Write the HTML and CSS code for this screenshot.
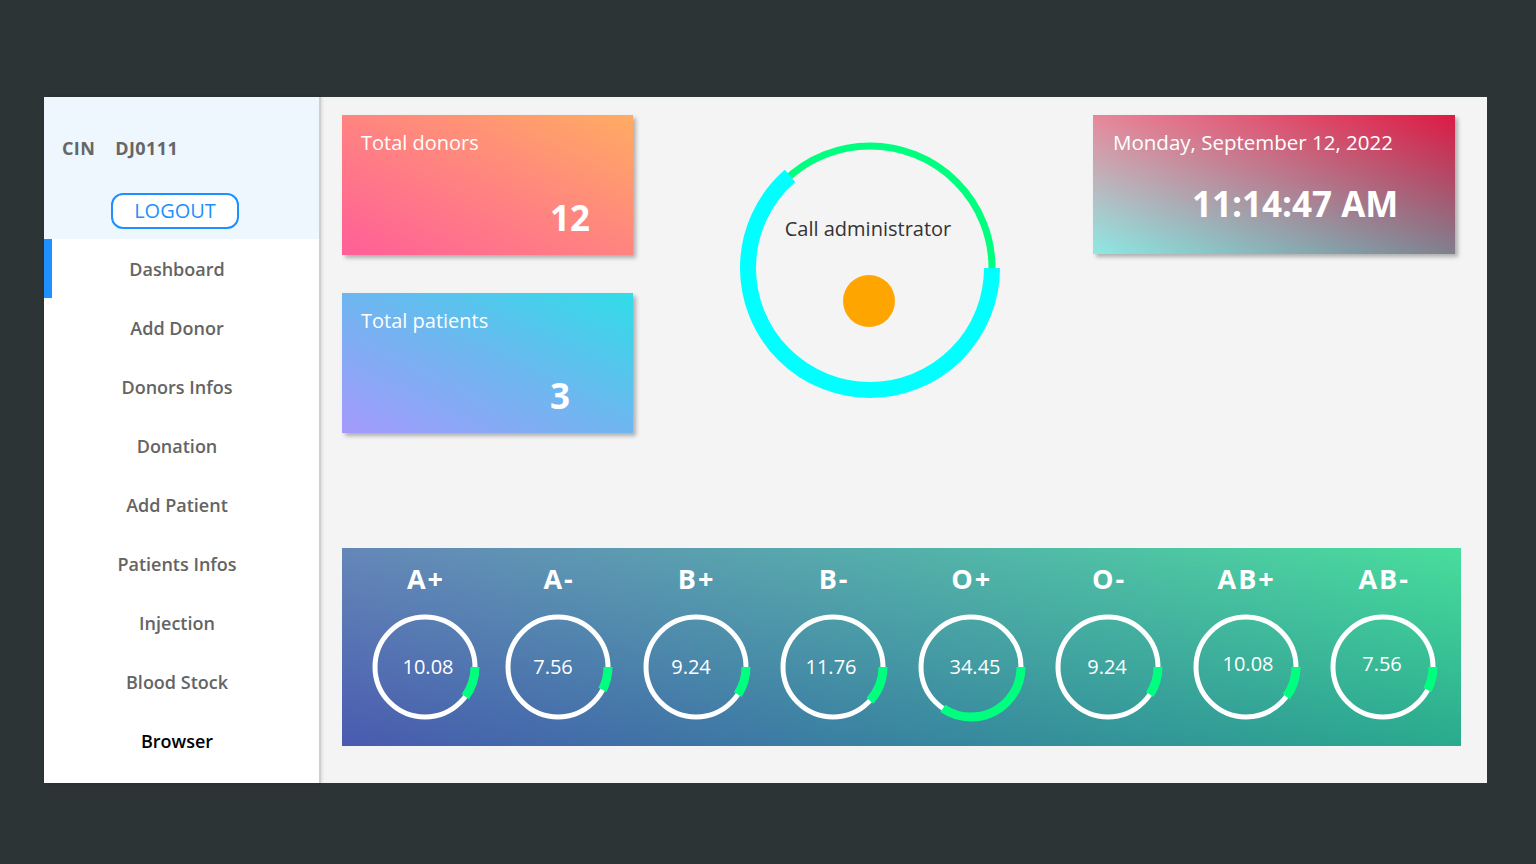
FILE: index.html
```html
<!DOCTYPE html>
<html lang="en">
<head>
<meta charset="utf-8">
<title>Blood Bank Dashboard</title>
<link rel="stylesheet" href="styles.css">
</head>
<body>
<div class="app">
  <aside class="sidebar">
    <div class="side-head">
      <div class="cin"><span>CIN</span><span>DJ0111</span></div>
      <button class="logout">LOGOUT</button>
    </div>
    <nav class="menu">
      <a class="item active">Dashboard</a>
      <a class="item">Add Donor</a>
      <a class="item">Donors Infos</a>
      <a class="item">Donation</a>
      <a class="item">Add Patient</a>
      <a class="item">Patients Infos</a>
      <a class="item">Injection</a>
      <a class="item">Blood Stock</a>
      <a class="item dark">Browser</a>
    </nav>
  </aside>
  <main class="main">
    <section class="top">
      <div class="stats">
        <div class="stat donors">
          <div class="stat-label">Total donors</div>
          <div class="stat-value">12</div>
        </div>
        <div class="stat patients">
          <div class="stat-label">Total patients</div>
          <div class="stat-value">3</div>
        </div>
      </div>
      <div class="call">
        <svg class="call-ring" width="260" height="260" viewBox="0 0 260 260">
          <circle cx="130" cy="130" r="122" fill="none" stroke="#00ff7f" stroke-width="7"/>
          <circle cx="130" cy="130" r="122" fill="none" stroke="#00ffff" stroke-width="16" stroke-dasharray="487.5 279" />
          <text class="call-text" x="128" y="98" text-anchor="middle">Call administrator</text>
          <circle cx="129" cy="163" r="26" fill="#ffa500"/>
        </svg>
      </div>
      <div class="date-card">
        <div class="date-inner">
          <div class="date">Monday, September 12, 2022</div>
          <div class="time">11:14:47 AM</div>
        </div>
      </div>
    </section>
    <section class="blood">
      <div class="group first"><div class="g-label">A+</div>
        <svg class="gauge" width="112" height="112" viewBox="0 0 112 112"><circle cx="56" cy="56" r="50" class="g-track"/><circle cx="56" cy="56" r="50" class="g-fill" stroke-dasharray="31.67 400"/><text x="59" y="55" class="g-val">10.08</text></svg></div>
      <div class="group"><div class="g-label">A-</div>
        <svg class="gauge" width="112" height="112" viewBox="0 0 112 112"><circle cx="56" cy="56" r="50" class="g-track"/><circle cx="56" cy="56" r="50" class="g-fill" stroke-dasharray="23.75 400"/><text x="51" y="55" class="g-val">7.56</text></svg></div>
      <div class="group"><div class="g-label">B+</div>
        <svg class="gauge" width="112" height="112" viewBox="0 0 112 112"><circle cx="56" cy="56" r="50" class="g-track"/><circle cx="56" cy="56" r="50" class="g-fill" stroke-dasharray="29.03 400"/><text x="51" y="55" class="g-val">9.24</text></svg></div>
      <div class="group"><div class="g-label">B-</div>
        <svg class="gauge" width="112" height="112" viewBox="0 0 112 112"><circle cx="56" cy="56" r="50" class="g-track"/><circle cx="56" cy="56" r="50" class="g-fill" stroke-dasharray="36.95 400"/><text x="54" y="55" class="g-val">11.76</text></svg></div>
      <div class="group"><div class="g-label">O+</div>
        <svg class="gauge" width="112" height="112" viewBox="0 0 112 112"><circle cx="56" cy="56" r="50" class="g-track"/><circle cx="56" cy="56" r="50" class="g-fill" stroke-dasharray="108.23 400"/><text x="60" y="55" class="g-val">34.45</text></svg></div>
      <div class="group"><div class="g-label">O-</div>
        <svg class="gauge" width="112" height="112" viewBox="0 0 112 112"><circle cx="56" cy="56" r="50" class="g-track"/><circle cx="56" cy="56" r="50" class="g-fill" stroke-dasharray="29.03 400"/><text x="55" y="55" class="g-val">9.24</text></svg></div>
      <div class="group"><div class="g-label">AB+</div>
        <svg class="gauge" width="112" height="112" viewBox="0 0 112 112"><circle cx="56" cy="56" r="50" class="g-track"/><circle cx="56" cy="56" r="50" class="g-fill" stroke-dasharray="31.67 400"/><text x="58" y="52" class="g-val">10.08</text></svg></div>
      <div class="group"><div class="g-label">AB-</div>
        <svg class="gauge" width="112" height="112" viewBox="0 0 112 112"><circle cx="56" cy="56" r="50" class="g-track"/><circle cx="56" cy="56" r="50" class="g-fill" stroke-dasharray="23.75 400"/><text x="55" y="52" class="g-val">7.56</text></svg></div>
    </section>
  </main>
</div>
</body>
</html>
```
FILE: styles.css
```css
* { box-sizing: border-box; }
html, body { margin: 0; padding: 0; }
body {
  background: #2d3436;
  font-family: "Open Sans", "Noto Sans", sans-serif;
  width: 1536px;
  height: 864px;
  overflow: hidden;
}
.app {
  display: flex;
  margin: 97px 0 0 44px;
  width: 1443px;
  height: 686px;
}
.sidebar {
  width: 277px;
  flex: none;
  background: #ffffff;
  border-right: 2px solid #cfcfcf;
  box-shadow: 1px 0 3px rgba(0,0,0,0.12);
  display: flex;
  flex-direction: column;
  position: relative;
  z-index: 1;
}
.side-head {
  height: 142px;
  background: #eef7fe;
  padding-top: 39px;
}
.cin {
  display: flex;
  gap: 20px;
  padding-left: 18px;
  font-size: 18px;
  font-weight: 700;
  line-height: 24px;
  letter-spacing: 0.4px;
  color: #666;
}
.logout {
  display: block;
  margin: 33px 0 0 67px;
  width: 128px;
  height: 36px;
  border: 2px solid #1e90ff;
  border-radius: 12px;
  background: #ffffff;
  color: #1e90ff;
  font-family: "Open Sans", "Noto Sans", sans-serif;
  font-size: 20px;
  line-height: 30px;
  padding: 0;
}
.menu { display: flex; flex-direction: column; }
.item {
  height: 59px;
  display: flex;
  align-items: center;
  justify-content: center;
  padding-right: 9px;
  font-size: 18px;
  font-weight: 600;
  color: #646464;
}
.item.active { box-shadow: inset 8px 0 0 #1e90ff; }
.item.dark { color: #000; }

.main {
  flex: 1;
  background: #f4f4f4;
  padding: 18px 26px 0 21px;
}
.top {
  display: flex;
  height: 318px;
}
.stats {
  display: flex;
  flex-direction: column;
  gap: 38px;
}
.stat {
  width: 291px;
  height: 140px;
  display: flex;
  flex-direction: column;
  padding: 14px 0 17px 19px;
  color: #fff;
  box-shadow: 3px 3px 4px rgba(0,0,0,0.28);
}
.donors { background: linear-gradient(to top right, #ff5f98 0%, #ff8480 50%, #ffac63 100%); }
.patients { background: linear-gradient(to top right, #a59afc 0%, #6fb6f0 50%, #30dde8 100%); }
.stat-label { font-size: 20px; line-height: 28px; }
.stat-value {
  margin-top: auto;
  padding-left: 189px;
  font-size: 35px;
  font-weight: 700;
  line-height: 40px;
}
.call {
  margin-left: 107px;
  padding-top: 23px;
}
.call-ring { display: block; }
.call-text { font-size: 20px; fill: #333; font-family: "Open Sans", "Noto Sans", sans-serif; }
.date-card {
  margin-left: 93px;
  width: 362px;
  height: 139px;
  position: relative;
  background: linear-gradient(to right, #8ee9e4, #80808e);
  box-shadow: 3px 3px 4px rgba(0,0,0,0.28);
  color: #fff;
}
.date-card::before {
  content: "";
  position: absolute;
  inset: 0;
  background: linear-gradient(to right, #e8879a, #dc1a44);
  -webkit-mask-image: linear-gradient(to bottom, #000, transparent);
  mask-image: linear-gradient(to bottom, #000, transparent);
}
.date-inner { position: relative; padding: 13px 0 0 20px; }
.date { font-size: 20.5px; line-height: 28px; }
.time {
  margin-top: 28px;
  padding-left: 79px;
  font-size: 35px;
  font-weight: 700;
  line-height: 40px;
}

.blood {
  margin-top: 115px;
  width: 1119px;
  height: 198px;
  display: flex;
  padding: 15px 0 0 18px;
  position: relative;
  background: linear-gradient(to right, #4a5bb0, #3a80a2 45%, #2aab8e);
}
.blood::before {
  content: "";
  position: absolute;
  inset: 0;
  background: linear-gradient(to right, #6587b8, #55b0aa 50%, #48dd9c);
  -webkit-mask-image: linear-gradient(to bottom, #000, transparent);
  mask-image: linear-gradient(to bottom, #000, transparent);
}
.group {
  position: relative;
  width: 137.5px;
  display: flex;
  flex-direction: column;
  align-items: center;
  gap: 16px;
}
.group.first { width: 128.7px; margin-left: 0.7px; }
.g-label {
  color: #fff;
  font-size: 27px;
  font-weight: 700;
  line-height: 32px;
  letter-spacing: 2px;
  padding-left: 2px;
}
.gauge { display: block; }
.g-track { fill: none; stroke: #fff; stroke-width: 5; }
.g-fill { fill: none; stroke: #00ff7f; stroke-width: 9; }
.g-val {
  fill: #fff;
  font-size: 20px;
  font-family: "Open Sans", "Noto Sans", sans-serif;
  text-anchor: middle;
  dominant-baseline: central;
}
```
